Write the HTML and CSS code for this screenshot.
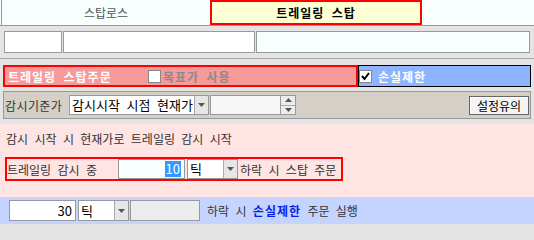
FILE: index.html
```html
<!DOCTYPE html>
<html lang="ko">
<head>
<meta charset="utf-8">
<title>트레일링 스탑</title>
<link rel="stylesheet" href="styles.css">
</head>
<body>
<div class="tabs">
  <div class="tab tab-stop">스탑로스</div>
  <div class="tab tab-trail">트레일링 스탑</div>
</div>
<div class="top">
  <div class="inp w1"></div>
  <div class="inp w2"></div>
  <div class="inp w3 cyan"></div>
</div>
<div class="mid">
  <div class="headbar">
    <div class="redbar">
      <span class="title">트레일링 스탑주문</span>
      <span class="chk"></span>
      <span class="chk-label gray">목표가 사용</span>
    </div>
    <div class="bluebar">
      <span class="chk checked"><svg width="11" height="11" viewBox="0 0 11 11"><polyline points="2,5 4.5,8 9,2" fill="none" stroke="#000" stroke-width="2"/></svg></span>
      <span class="chk-label white">손실제한</span>
    </div>
  </div>
  <div class="graybox">
    <span class="lbl">감시기준가</span>
    <div class="sel sel-wide">
      <span class="sel-text">감시시작 시점 현재가</span>
      <span class="sel-btn"><svg width="7" height="4" viewBox="0 0 7 4"><polygon points="0,0 7,0 3.5,4" fill="#555"/></svg></span>
    </div>
    <div class="num"></div>
    <div class="spin">
      <span class="spin-b"><svg width="7" height="4" viewBox="0 0 7 4"><polygon points="0,4 7,4 3.5,0" fill="#555"/></svg></span>
      <span class="spin-b"><svg width="7" height="4" viewBox="0 0 7 4"><polygon points="0,0 7,0 3.5,4" fill="#555"/></svg></span>
    </div>
    <button class="btn">설정유의</button>
  </div>
</div>
<div class="pink">
  <div class="desc">감시 시작 시 현재가로 트레일링 감시 시작</div>
  <div class="redrow">
    <span class="rl">트레일링 감시 중</span>
    <div class="val cyanbg"><span class="hl">10</span></div>
    <div class="sel sel-tick">
      <span class="sel-text">틱</span>
      <span class="sel-btn"><svg width="7" height="4" viewBox="0 0 7 4"><polygon points="0,0 7,0 3.5,4" fill="#555"/></svg></span>
    </div>
    <span class="after">하락 시 스탑 주문</span>
  </div>
</div>
<div class="bottom">
  <div class="val val-b">30</div>
  <div class="sel sel-tick sel-b">
    <span class="sel-text">틱</span>
    <span class="sel-btn"><svg width="7" height="4" viewBox="0 0 7 4"><polygon points="0,0 7,0 3.5,4" fill="#555"/></svg></span>
  </div>
  <div class="dis"></div>
  <span class="btxt">하락 시 <b class="blue">손실제한</b> 주문 실행</span>
</div>
</body>
</html>
```
FILE: styles.css
```css
* { box-sizing: border-box; }
html, body { margin: 0; padding: 0; }
body {
  width: 534px;
  height: 224px;
  overflow: hidden;
  background: #e4e4e4;
  font-family: "Noto Sans CJK KR", "Noto Sans", sans-serif;
  font-size: 12px;
  color: #333;
  word-spacing: 3px;
}
svg { display: block; }

.tabs {
  display: flex;
  height: 26px;
  background: #f8ffff;
  border-bottom: 1px solid #9a9a9a;
}
.tab {
  height: 25px;
  display: flex;
  align-items: center;
  justify-content: center;
}
.tab-stop {
  margin-left: 1px;
  width: 209px;
  border-left: 1px solid #9a9a9a;
  color: #555;
}
.tab-trail {
  width: 212px;
  background: #ffffd6;
  border: 2px solid #ff0000;
  font-weight: bold;
  color: #000;
  letter-spacing: 1px;
}

.top {
  display: flex;
  gap: 1px;
  height: 33px;
  padding: 5px 0 0 4px;
  border-bottom: 1px solid #a8a8a8;
}
.inp {
  height: 22px;
  border: 1px solid #999;
  background: #fff;
}
.w1 { width: 58px; }
.w2 { width: 192px; }
.w3 { width: 274px; }
.cyan { background: #f8ffff; }

.mid {
  height: 65px;
  padding: 6px 0 0 3px;
}
.headbar {
  display: flex;
  height: 22px;
}
.redbar {
  width: 355px;
  border: 2px solid #ff0000;
  background: #f79a9a;
  display: flex;
  align-items: center;
  padding-left: 3px;
}
.title {
  width: 140px;
  color: #fff;
  font-weight: bold;
  letter-spacing: 1px;
}
.chk {
  width: 13px;
  height: 13px;
  background: #fff;
  border: 1px solid #888;
  display: flex;
  align-items: center;
  justify-content: center;
}
.chk-label {
  font-weight: bold;
  letter-spacing: 1px;
}
.redbar .chk-label { margin-left: 2px; }
.gray { color: #8a8a8a; }
.white { color: #fff; }
.bluebar {
  width: 173px;
  border: 1px solid #000;
  background: #8fb4ff;
  display: flex;
  align-items: center;
}
.bluebar .chk-label { margin-left: 6px; }

.graybox {
  margin-top: 4px;
  width: 528px;
  height: 28px;
  border: 1px solid #999;
  background: #d4d0c8;
  display: flex;
  align-items: center;
  padding: 0 1px;
}
.lbl {
  width: 64px;
  letter-spacing: 0.4px;
  word-spacing: 0;
}
.sel {
  display: flex;
  height: 20px;
  border: 1px solid #999;
  background: #fff;
}
.sel-text {
  flex: 1;
  padding-left: 2px;
  color: #000;
  font-size: 13px;
  line-height: 18px;
  white-space: nowrap;
}
.sel-btn {
  width: 14px;
  background: #e6e6e6;
  border-left: 1px solid #aaa;
  display: flex;
  align-items: center;
  justify-content: center;
}
.sel-wide { width: 140px; }
.num {
  width: 71px;
  height: 20px;
  margin-left: 1px;
  border: 1px solid #999;
  background: #f6f6f6;
}
.spin {
  width: 15px;
  height: 20px;
  display: flex;
  flex-direction: column;
  border: 1px solid #999;
  border-left: none;
}
.spin-b {
  flex: 1;
  background: #ececec;
  display: flex;
  align-items: center;
  justify-content: center;
}
.spin-b + .spin-b { border-top: 1px solid #aaa; }
.btn {
  margin-left: auto;
  width: 60px;
  height: 19px;
  padding: 0;
  border: 1px solid #666;
  box-shadow: inset 1px 1px 0 #fff;
  background: #f4f4f4;
  font-family: inherit;
  font-size: 12px;
  color: #000;
  line-height: 17px;
  word-spacing: 0;
}

.pink {
  height: 73px;
  background: #ffe4e4;
  padding-top: 7px;
}
.desc {
  height: 16px;
  line-height: 16px;
  padding-left: 6px;
}
.redrow {
  margin: 10px 0 0 5px;
  width: 338px;
  height: 24px;
  border: 2px solid #ff0000;
  display: flex;
  align-items: center;
}
.rl { width: 111px; }
.val {
  width: 67px;
  height: 20px;
  border: 1px solid #999;
  background: #fff;
  display: flex;
  align-items: center;
  justify-content: flex-end;
  padding-right: 3px;
  font-size: 13px;
  color: #000;
}
.cyanbg { background: #f8ffff; }
.hl {
  background: #3399ff;
  color: #fff;
  line-height: 16px;
  padding: 0 1px;
}
.sel-tick { width: 51px; margin-left: 2px; }
.after { margin-left: 2px; }

.bottom {
  height: 27px;
  background: #c4d4ff;
  padding: 3px 0 0 9px;
  display: flex;
  align-items: flex-start;
}
.val-b { height: 21px; }
.sel-b { height: 21px; }
.sel-b .sel-text { line-height: 19px; }
.dis {
  width: 70px;
  height: 21px;
  margin-left: 1px;
  border: 1px solid #999;
  background: #ececec;
}
.btxt {
  margin-left: 7px;
  line-height: 21px;
  color: #333;
}
.blue { color: #0a1ee6; letter-spacing: 1px; }
```
